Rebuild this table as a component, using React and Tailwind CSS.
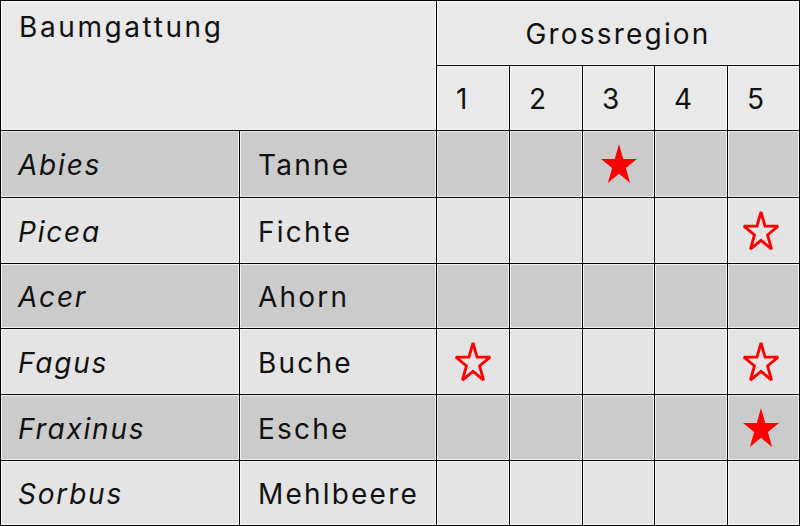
import React from 'react';

const rows = [
  { genus: 'Abies', name: 'Tanne', marks: [null, null, 'full', null, null] },
  { genus: 'Picea', name: 'Fichte', marks: [null, null, null, null, 'open'] },
  { genus: 'Acer', name: 'Ahorn', marks: [null, null, null, null, null] },
  { genus: 'Fagus', name: 'Buche', marks: ['open', null, null, null, 'open'] },
  { genus: 'Fraxinus', name: 'Esche', marks: [null, null, null, null, 'full'] },
  { genus: 'Sorbus', name: 'Mehlbeere', marks: [null, null, null, null, null] },
];

// slightly tall five-point star, as in the source sheet
const STAR = 'M18 0 L22.25 14.9 L36 14.9 L24.88 24.12 L29.13 39.05 L18 29.82 L6.87 39.05 L11.12 24.12 L0 14.9 L13.75 14.9 Z';

const Star = ({ filled }) => (
  <svg width="40" height="44" viewBox="-2 -2 40 44">
    {filled ? (
      <path d={STAR} fill="#ff0000" />
    ) : (
      <path
        d={STAR}
        fill="none"
        stroke="#ff0000"
        strokeWidth="3"
        strokeLinejoin="miter"
        strokeMiterlimit="2"
        transform="translate(18 20) scale(0.95) translate(-18 -20)"
      />
    )}
  </svg>
);

const cell = 'shadow-[inset_0_0_0_1px_rgba(255,255,255,0.7)]';

export default function App() {
  return (
    <div className="w-[800px] h-[526px] bg-black font-['Inter',sans-serif] text-[28px] tracking-[2.2px] text-[#111]">
      <div className="grid grid-cols-[238px_196px_72px_72px_71px_72px_71px] grid-rows-[64px_64px_66px_65px_64px_65px_65px_64px] gap-px p-px">
        {/* Header */}
        <div className={`col-span-2 row-span-2 bg-[#e9e9e9] pl-[18px] pt-[5px] tracking-[2.6px] ${cell}`}>Baumgattung</div>
        <div className={`col-span-5 flex items-center justify-center pt-[2px] bg-[#e9e9e9] ${cell}`}>Grossregion</div>
        {[1, 2, 3, 4, 5].map((n) => (
          <div key={n} className={`flex items-center bg-[#e9e9e9] pl-[19px] pt-[2px] ${cell}`}>{n}</div>
        ))}

        {/* Body */}
        {rows.map((r, i) => {
          const bg = i % 2 === 0 ? 'bg-[#cbcbcb]' : 'bg-[#e4e4e4]';
          return (
            <React.Fragment key={r.genus}>
              <div className={`flex items-center italic pl-[17px] pt-[2px] tracking-[1.8px] ${bg} ${cell}`}>{r.genus}</div>
              <div className={`flex items-center pl-[18px] pt-[2px] ${bg} ${cell}`}>{r.name}</div>
              {r.marks.map((m, j) => (
                <div key={j} className={`flex items-center justify-center ${j === 4 ? 'pr-[5px]' : ''} ${bg} ${cell}`}>
                  {m && <Star filled={m === 'full'} />}
                </div>
              ))}
            </React.Fragment>
          );
        })}
      </div>
    </div>
  );
}
